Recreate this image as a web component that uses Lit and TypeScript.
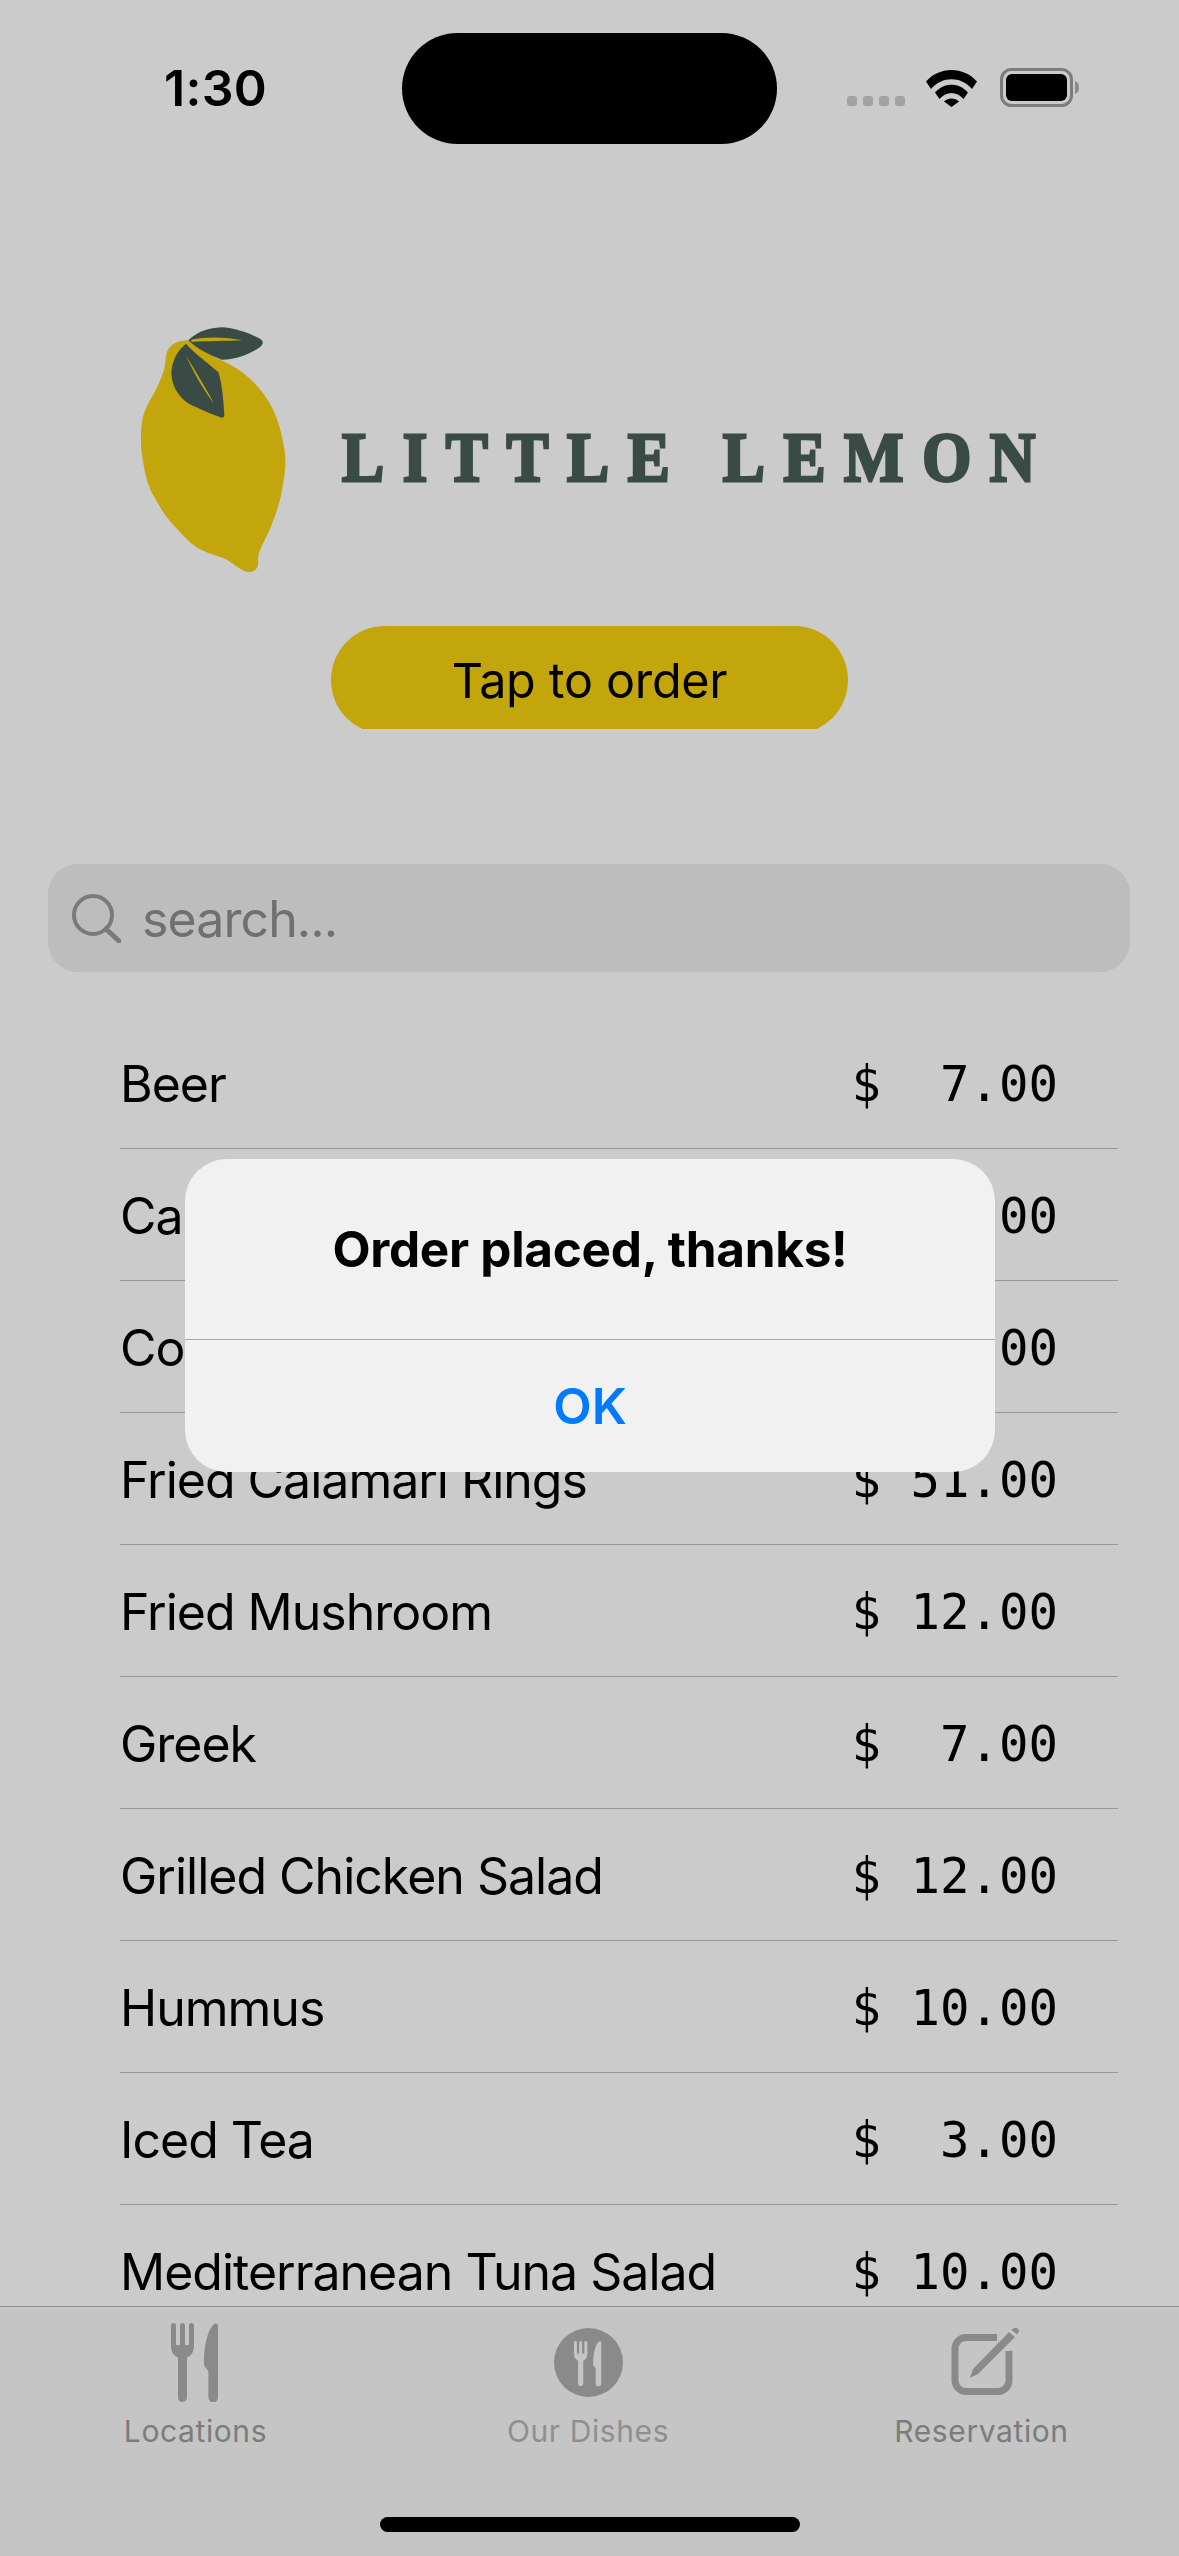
import { LitElement, html, css, svg } from 'lit';
import { customElement } from 'lit/decorators.js';

const items = [
  ['Beer', '$  7.00'],
  ['Caesar Salad', '$ 12.00'],
  ['Coffee', '$  3.00'],
  ['Fried Calamari Rings', '$ 51.00'],
  ['Fried Mushroom', '$ 12.00'],
  ['Greek', '$  7.00'],
  ['Grilled Chicken Salad', '$ 12.00'],
  ['Hummus', '$ 10.00'],
  ['Iced Tea', '$  3.00'],
  ['Mediterranean Tuna Salad', '$ 10.00'],
];

// fork and knife shapes, shared by the first two tabs
const cutlery = svg`
  <path d="M0 2.500a2.500 2.500 0 0 1 5 0V22h4V2.500a2.500 2.500 0 0 1 5 0V22h4V2.500a2.500 2.500 0 0 1 5 0V22c0 7-2.500 10.500-7 12.500v40a4.500 4.500 0 0 1-9 0v-40C2.500 32.500 0 29 0 22z"/>
  <path d="M47 3v71.500a4.800 4.800 0 0 1-9.600 0V50c0-2-1-3.500-2.500-5-1.500-1.500-2-3-2-5.500C32.900 22 37 7 42.500 1.500 44.500-.5 47 .5 47 3z"/>`;

@customElement('app-root')
export class AppRoot extends LitElement {
  static styles = css`
    :host {
      display: flex;
      flex-direction: column;
      position: relative;
      width: 1179px;
      height: 2556px;
      overflow: hidden;
      background: #cbcbcb;
      color: #000;
      font-family: Inter, "Liberation Sans", sans-serif;
    }

    .status {
      flex: none;
      height: 160px;
      display: flex;
      align-items: flex-start;
      box-sizing: border-box;
      padding: 60px 100px 0 164px;
    }
    .time {
      font-size: 50px;
      line-height: 56px;
      font-weight: 600;
      letter-spacing: 0.300px;
    }
    .island {
      position: absolute;
      left: 402px;
      top: 33px;
      width: 375px;
      height: 111px;
      border-radius: 56px;
      background: #000;
    }
    .indicators {
      margin-left: auto;
      display: flex;
      align-items: flex-end;
      margin-top: 8px;
    }
    .dots { display: flex; gap: 6px; margin-right: 21px; margin-bottom: 1px; }
    .dots i { width: 10px; height: 10px; border-radius: 3px; background: #a3a3a3; }
    .wifi { display: block; margin-right: 23px; }
    .battery { display: block; }

    .logo {
      flex: none;
      display: flex;
      align-items: center;
      padding: 167px 0 0 140px;
    }
    .lemon { display: block; flex: none; }
    .brand {
      margin: 16px 0 0 55px;
      font-family: "Liberation Serif", serif;
      font-weight: 700;
      font-size: 70px;
      line-height: 60px;
      letter-spacing: 20.700px;
      color: #3a4b46;
      -webkit-text-stroke: 3px #3a4b46;
      white-space: pre;
      transform: scaleX(.9);
      transform-origin: left center;
    }

    .order {
      flex: none;
      align-self: flex-start;
      margin: 53px 0 0 331px;
      width: 517px;
      height: 103px;
      overflow: hidden;
    }
    .order span {
      display: block;
      height: 108px;
      border-radius: 54px;
      background: #c3a50c;
      text-align: center;
      font-size: 48.500px;
      line-height: 110px;
      letter-spacing: -0.300px;
    }

    .search {
      flex: none;
      margin: 135px 49px 0 48px;
      height: 108px;
      border-radius: 30px;
      background: #bdbdbd;
      display: flex;
      align-items: center;
      padding-left: 24px;
      gap: 21px;
      color: #707070;
      font-size: 50px;
      letter-spacing: -0.900px;
    }
    .search svg { display: block; flex: none; }
    .search span { margin-top: 2px; }

    .list {
      flex: 1;
      min-height: 0;
      overflow: hidden;
      margin: 45px 61px 0 120px;
      list-style: none;
      padding: 0;
    }
    .list li {
      height: 132px;
      box-sizing: border-box;
      border-bottom: 1px solid #979797;
      display: flex;
      align-items: center;
      justify-content: space-between;
      padding: 3px 60px 0 0;
      font-size: 50px;
      letter-spacing: -1px;
    }
    .price {
      font-family: "DejaVu Sans Mono", monospace;
      font-size: 49px;
      letter-spacing: 0;
      white-space: pre;
    }

    .tabs {
      flex: none;
      height: 250px;
      box-sizing: border-box;
      border-top: 1px solid #8f8f8f;
      background: #c4c5c4;
      display: grid;
      grid-template-columns: repeat(3, 1fr);
    }
    .tab {
      display: flex;
      flex-direction: column;
      align-items: center;
      padding: 15px 2px 0 0;
      color: #7c7c7c;
      font-size: 30px;
      line-height: 36px;
      letter-spacing: 0.600px;
    }
    .tab.dim { color: #8f8f8f; padding-right: 3px; }
    .tab .glyph {
      height: 80px;
      display: flex;
      align-items: center;
      margin-bottom: 11px;
    }
    .tab:first-child .glyph { margin-right: 3px; }
    .tab:last-child .glyph { margin-left: 6px; }
    .tab svg { display: block; }

    .home {
      position: absolute;
      left: 380px;
      top: 2517px;
      width: 420px;
      height: 15px;
      border-radius: 8px;
      background: #000;
    }

    .alert {
      position: absolute;
      left: 185px;
      top: 1159px;
      width: 810px;
      height: 313px;
      border-radius: 42px;
      background: #f0f1f0;
      display: flex;
      flex-direction: column;
      text-align: center;
    }
    .alert h2 {
      margin: 0;
      height: 181px;
      box-sizing: border-box;
      padding-top: 60px;
      border-bottom: 1px solid #a8a8a8;
      font-size: 49.500px;
      line-height: 60px;
      font-weight: 700;
      letter-spacing: -0.300px;
    }
    .alert button {
      flex: 1;
      border: 0;
      background: none;
      padding: 0;
      font: inherit;
      font-size: 50px;
      font-weight: 600;
      color: #007aff;
    }
  `;

  render() {
    return html`
      <div class="status">
        <span class="time">1:30</span>
        <div class="indicators">
          <div class="dots"><i></i><i></i><i></i><i></i></div>
          <svg class="wifi" width="51" height="38" viewBox="0 0 51 38">
            <path d="M0 12.500C13-3 38-3 51 12.500L46 20C35 7 16 7 5 20z"/>
            <path d="M9 23.500C18 13 33 13 42 23.500L37.500 30C31 22 20 22 13.500 30z"/>
            <path d="M18 32.500c4-4 11-4 15 0L25.500 38z"/>
          </svg>
          <svg class="battery" width="79" height="39" viewBox="0 0 79 39">
            <rect x="1.500" y="1.500" width="70" height="36" rx="10" fill="none" stroke="#7c7c7c" stroke-width="3"/>
            <rect x="6" y="6" width="61" height="27" rx="6"/>
            <path d="M75 13c3 1 4 3 4 6.500s-1 5.500-4 6.500z" fill="#8a8a8a"/>
          </svg>
        </div>
      </div>
      <div class="island"></div>

      <div class="logo">
        <svg class="lemon" width="147" height="246" viewBox="90 80 441 738">
          <path fill="#c3a50c" d="M235 120C205 120 178 132 170 158C165 175 168 195 160 215C150 245 135 275 120 300C105 325 95 355 94 385C90 420 95 465 102 500C108 535 118 565 130 585C145 612 160 640 185 668C210 695 235 725 262 742C290 758 320 765 345 775C365 785 385 805 410 815C425 816 440 812 444 795C446 780 442 770 450 750C460 725 475 700 488 665C500 635 515 590 520 545C526 510 529 480 522 440C515 400 505 360 488 325C470 290 445 258 420 235C395 212 365 195 340 183C300 165 265 145 235 120Z"/>
          <path fill="#3a4b46" d="M235 120C255 100 290 82 335 81C375 82 420 100 450 115C462 122 460 132 450 140C425 158 385 176 335 178C300 165 260 145 235 120Z"/>
          <path fill="#c3a50c" d="M244 118C290 108 350 110 398 120C350 122 290 122 244 125Z"/>
          <path fill="#3a4b46" d="M228 130C205 148 185 180 184 220C186 262 210 295 245 315C280 330 310 345 335 352C345 352 343 345 342 330C340 295 336 250 325 215C295 190 255 160 228 130Z"/>
          <path fill="#c3a50c" d="M227 165C245 205 280 270 312 310C285 260 252 205 227 165Z"/>
        </svg>
        <span class="brand">LITTLE LEMON</span>
      </div>

      <div class="order"><span>Tap to order</span></div>

      <div class="search">
        <svg width="49" height="49" viewBox="0 0 49 49" fill="none" stroke="#7a7a7a" stroke-width="4">
          <circle cx="21" cy="21" r="19"/>
          <path d="M34 35l13 12" stroke-width="5" stroke-linecap="round"/>
        </svg>
        <span>search...</span>
      </div>

      <ul class="list">
        ${items.map(([name, price]) => html`<li><span>${name}</span><span class="price">${price}</span></li>`)}
      </ul>

      <nav class="tabs">
        <div class="tab">
          <span class="glyph">
            <svg width="47" height="79" viewBox="0 0 47 79" fill="#8a8a8a">${cutlery}</svg>
          </span>
          Locations
        </div>
        <div class="tab dim">
          <span class="glyph">
            <svg width="69" height="69" viewBox="0 0 69 69">
              <circle cx="34.500" cy="34.500" r="34.500" fill="#8a8a8a"/>
              <g fill="#c4c5c4" transform="translate(20 13) scale(.58 .57)">${cutlery}</g>
            </svg>
          </span>
          Our Dishes
        </div>
        <div class="tab">
          <span class="glyph">
            <svg width="68" height="68" viewBox="0 0 68 68">
              <path d="M46 9.500H15A11 11 0 0 0 4 20.500v32A11 11 0 0 0 15 63.500h32A11 11 0 0 0 58 52.500V23" fill="none" stroke="#8a8a8a" stroke-width="7"/>
              <path d="M62 1a3 3 0 0 1 5 4L66 6.500 60 1.500zM58 4l6 5-37 37-8 4 3-9z" fill="#8a8a8a"/>
            </svg>
          </span>
          Reservation
        </div>
      </nav>
      <div class="home"></div>

      <div class="alert" role="alertdialog">
        <h2>Order placed, thanks!</h2>
        <button>OK</button>
      </div>
    `;
  }
}
